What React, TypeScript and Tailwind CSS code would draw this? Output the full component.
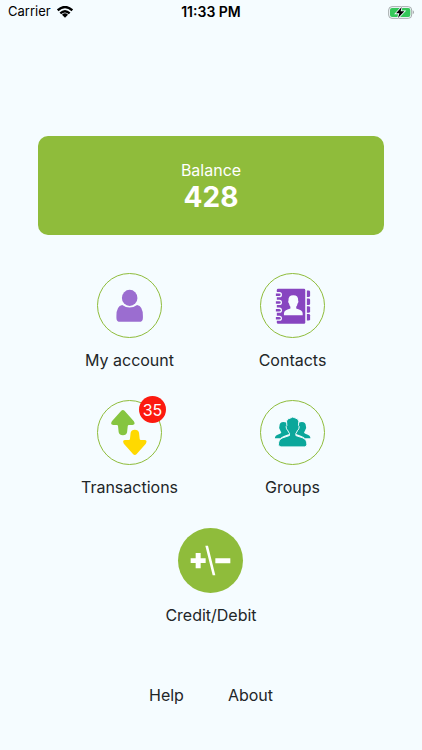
import type { ReactNode } from "react";

const AccountIcon = () => (
  <svg viewBox="0 0 195 195" className="size-full" fill="#9b6dd0" aria-hidden="true">
    <ellipse cx="98" cy="74" rx="24" ry="25" />
    <path d="M75 96Q98 112 121 96Q139 99 139 130V136Q139 148 127 148H69Q57 148 57 136V130Q57 99 75 96Z" />
  </svg>
);

const ContactsIcon = () => (
  <svg viewBox="0 0 195 195" className="size-full" fill="#8745c0" aria-hidden="true">
    <path d="M53 46H133Q137 46 137 50V150Q137 154 133 154H53Q49 154 49 150V50Q49 46 53 46Z" />
    {[64, 88, 112, 137].map((y) => (
      <g key={y}>
        <path d={`M42 ${y - 8}H57Q65 ${y - 8} 65 ${y}Q65 ${y + 8} 57 ${y + 8}H42Z`} fill="#f5fcff" />
        <path d={`M46 ${y - 4}H56Q61 ${y - 4} 61 ${y}Q61 ${y + 4} 56 ${y + 4}H46Z`} />
      </g>
    ))}
    {[51, 76, 100, 124].map((y) => (
      <path key={y} d={`M142 ${y}H147Q152 ${y} 152 ${y + 4}V${y + 16}Q152 ${y + 20} 147 ${y + 20}H142Z`} />
    ))}
    <path
      fill="#f5fcff"
      d="M100 66Q116 66 115 82Q118 87 113 92Q112 98 109 101V107Q129 112 129 122V128H71V122Q71 112 91 107V101Q88 98 87 92Q82 87 85 82Q84 66 100 66Z"
    />
  </svg>
);

const TransactionsIcon = () => (
  <svg viewBox="0 0 195 195" className="size-full" aria-hidden="true">
    <path
      fill="#86c540"
      d="M72 30Q77 25 82 30L111 63Q117 74 107 74H96Q92 74 92 78L90 97Q88 106 77 106Q66 106 64 97L62 78Q62 74 58 74H47Q37 74 43 63Z"
    />
    <path
      fill="#ffd900"
      d="M109 165Q114 170 119 165L148 132Q154 121 144 121H133Q129 121 129 117L127 98Q125 89 114 89Q103 89 101 98L99 117Q99 121 95 121H84Q74 121 80 132Z"
    />
  </svg>
);

const GroupsIcon = () => (
  <svg viewBox="0 0 195 195" className="size-full" fill="#0ba79b" aria-hidden="true">
    <path d="M80 67Q58 60 57 78Q54 85 59 90Q61 96 63 97Q62 101 55 103Q43 107 43 115H60Q68 108 88 102V94Z" />
    <path d="M116 67Q138 60 139 78Q142 85 137 90Q135 96 133 97Q134 101 141 103Q153 107 153 115H136Q128 108 108 102V94Z" />
    <path
      stroke="#f5fcff"
      strokeWidth="3"
      d="M79 62Q82 53 91 53Q98 47 105 52Q116 54 117 63L116 76Q120 78 117 86Q116 90 113 91Q111 97 108 100V107L129 114Q142 119 142 134Q142 142 134 142H62Q54 142 54 134Q54 119 67 114L88 107V100Q85 97 83 91Q80 90 79 86Q76 78 80 76Z"
    />
  </svg>
);

const CreditIcon = () => (
  <svg viewBox="0 0 195 195" className="size-full" fill="#fff" aria-hidden="true">
    <path d="M53 75H68V91H83V105H68V121H53V105H38V91H53ZM82 53H90L112 142H104ZM112 91H157V106H112Z" />
  </svg>
);

const WifiIcon = () => (
  <svg viewBox="0 0 48 36" className="h-3 w-4" aria-hidden="true">
    <g fill="none" stroke="#000" strokeWidth="7">
      <path d="M2 13Q24 -7 46 13" />
      <path d="M10 22Q24 9 38 22" />
    </g>
    <path d="M15 26Q24 18 33 26L24 35Z" />
  </svg>
);

const BatteryIcon = () => (
  <svg viewBox="0 0 78 39" className="h-[13px] w-[26px]" aria-hidden="true">
    <rect x="2" y="2" width="69" height="35" rx="10" fill="none" stroke="#a5abad" strokeWidth="3" />
    <rect x="6" y="6" width="61" height="27" rx="6" fill="#34c759" />
    <path d="M74 13Q78 14 78 19Q78 24 74 25Z" fill="#a5abad" />
    <path d="M41 3L24 22H34L30 36L49 16H38Z" fill="#000" stroke="#f5fcff" strokeWidth="5" paintOrder="stroke" />
  </svg>
);

type TileProps = {
  label: string;
  icon: ReactNode;
  badge?: number;
  filled?: boolean;
};

const Tile = ({ label, icon, badge, filled }: TileProps) => (
  <button type="button" className="flex flex-col items-center gap-[10px]">
    <span
      className={
        filled
          ? "relative block size-[65px] rounded-full bg-[#8fbc3b]"
          : "relative block size-[65px] rounded-full border border-[#8fbc3b]"
      }
    >
      {icon}
      {badge !== undefined && (
        <span className="absolute -top-[5px] -right-[5px] flex size-[27px] items-center justify-center rounded-full bg-[#fc1a10] text-base text-white">
          {badge}
        </span>
      )}
    </span>
    <span className="text-base leading-6">{label}</span>
  </button>
);

const App = () => {
  return (
    <div className="min-h-screen bg-[#f5fcff] font-['Inter',sans-serif] text-[#222628]">
      <header className="grid h-6 grid-cols-3 items-center px-2 text-[13px] text-black">
        <div className="flex items-center gap-[6px]">
          <span>Carrier</span>
          <WifiIcon />
        </div>
        <span className="text-center text-sm font-semibold">11:33 PM</span>
        <div className="flex justify-end">
          <BatteryIcon />
        </div>
      </header>

      <main>
        <section className="mx-[38px] mt-28 rounded-[10px] bg-[#8fbc3b] py-[22px] text-center text-white">
          <h2 className="text-base leading-6">Balance</h2>
          <p className="text-[28px] leading-[31px] font-bold">428</p>
        </section>

        <div className="mt-[38px] grid grid-cols-2 justify-items-center gap-y-7 px-12">
          <Tile label="My account" icon={<AccountIcon />} />
          <Tile label="Contacts" icon={<ContactsIcon />} />
          <Tile label="Transactions" icon={<TransactionsIcon />} badge={35} />
          <Tile label="Groups" icon={<GroupsIcon />} />
        </div>

        <div className="mt-[29px] flex justify-center">
          <Tile label="Credit/Debit" icon={<CreditIcon />} filled />
        </div>
      </main>

      <nav className="mt-14 flex justify-center gap-11 text-base leading-6">
        <a href="#help">Help</a>
        <a href="#about">About</a>
      </nav>
    </div>
  );
};

export default App;
